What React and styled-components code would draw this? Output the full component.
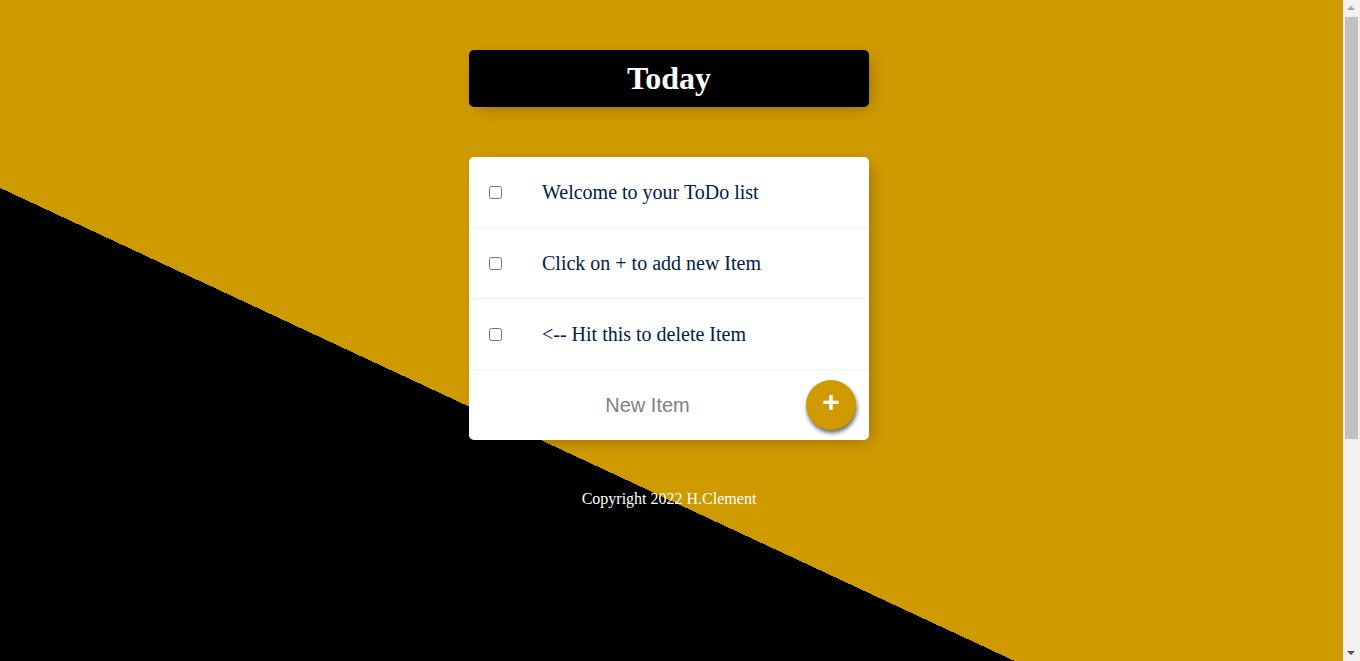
import React, { useState } from "react";
import styled, { createGlobalStyle } from "styled-components";

const GOLD = "#CF9900";

const GlobalStyle = createGlobalStyle`
  html {
    min-height: 1002px;
    margin-right: 17px;
    background-color: ${GOLD};
    background-image: linear-gradient(25deg, #000 50%, ${GOLD} 50%);
    font-family: "Liberation Serif", "Times New Roman", serif;
  }

  body {
    margin: 0 5px 0 0;
  }
`;

const Card = styled.div`
  max-width: 400px;
  margin: 50px auto;
  background: ${(props) => (props.dark ? "#000" : "#fff")};
  border-radius: 5px;
  box-shadow: 5px 5px 15px -5px rgba(0, 0, 0, 0.3);
  text-align: ${(props) => (props.dark ? "center" : "left")};
`;

const Title = styled.h1`
  margin: 0;
  padding: 10px;
  color: #fff;
  font-size: 32px;
  font-weight: bold;
`;

const Item = styled.div`
  min-height: 70px;
  display: flex;
  align-items: center;
  border-bottom: 1px solid #f1f1f1;
`;

const CheckBox = styled.input`
  margin: 20px;
  width: 13px;
  height: 13px;

  &:checked + p {
    text-decoration: line-through;
    text-decoration-color: ${GOLD};
  }
`;

const ItemText = styled.p`
  margin: 0;
  padding: 20px;
  font-size: 20px;
  font-weight: 200;
  color: #00204a;
`;

const NewItemForm = styled.form`
  min-height: 70px;
  display: flex;
  align-items: center;
  margin-left: 20px;
  text-align: center;
`;

const NewItemInput = styled.input`
  text-align: center;
  height: 60px;
  width: 313px;
  padding: 1px 2px;
  border: none;
  background: transparent;
  font-family: "Liberation Sans", Arial, sans-serif;
  font-size: 20px;
  font-weight: 200;

  &::placeholder {
    color: grey;
    opacity: 1;
  }

  &:focus {
    outline: none;
    box-shadow: inset 0 -3px 0 0 ${GOLD};
  }
`;

const AddButton = styled.button`
  min-height: 50px;
  width: 50px;
  padding: 0 0 6px;
  border-radius: 50%;
  border: 0;
  background-color: ${GOLD};
  color: #fff;
  font-family: "Liberation Sans", Arial, sans-serif;
  font-size: 30px;
  font-weight: bold;
  line-height: 1;
  box-shadow: 1px 3px 4px rgba(0, 0, 0, 0.6);
  cursor: pointer;
`;

const Footer = styled.footer`
  color: #fff;
  text-align: center;
  font-size: 16px;
`;

// stand-in for the browser's vertical scrollbar seen in the screenshot
const ScrollTrack = styled.div`
  position: fixed;
  top: 0;
  right: 0;
  width: 17px;
  height: 100vh;
  background: #f1f1f1;
`;

const ScrollThumb = styled.div`
  position: absolute;
  top: 17px;
  left: 2px;
  width: 13px;
  height: 422px;
  background: #c1c1c1;
`;

const ScrollArrow = styled.div`
  position: absolute;
  left: 4px;
  width: 0;
  height: 0;
  border-left: 4.5px solid transparent;
  border-right: 4.5px solid transparent;
  ${(props) =>
    props.down
      ? "bottom: 6px; border-top: 4px solid #505050;"
      : "top: 6px; border-bottom: 4px solid #a3a3a3;"}
`;

const starter = [
  "Welcome to your ToDo list",
  "Click on + to add new Item",
  "<-- Hit this to delete Item",
];

const App = () => {
  const [items, setItems] = useState(starter);
  const [text, setText] = useState("");

  const handleAdd = (e) => {
    e.preventDefault();
    if (!text.trim()) return;
    setItems([...items, text]);
    setText("");
  };

  return (
    <>
      <GlobalStyle />
      <Card dark>
        <Title>Today</Title>
      </Card>
      <Card>
        {items.map((item, i) => (
          <Item key={i}>
            <CheckBox
              type="checkbox"
              onChange={() => setItems(items.filter((_, j) => j !== i))}
            />
            <ItemText>{item}</ItemText>
          </Item>
        ))}
        <NewItemForm onSubmit={handleAdd}>
          <NewItemInput
            type="text"
            placeholder="New Item"
            autoComplete="off"
            value={text}
            onChange={(e) => setText(e.target.value)}
          />
          <AddButton type="submit">+</AddButton>
        </NewItemForm>
      </Card>
      <Footer>Copyright 2022 H.Clement</Footer>
      <ScrollTrack>
        <ScrollArrow />
        <ScrollThumb />
        <ScrollArrow down />
      </ScrollTrack>
    </>
  );
};

export default App;
